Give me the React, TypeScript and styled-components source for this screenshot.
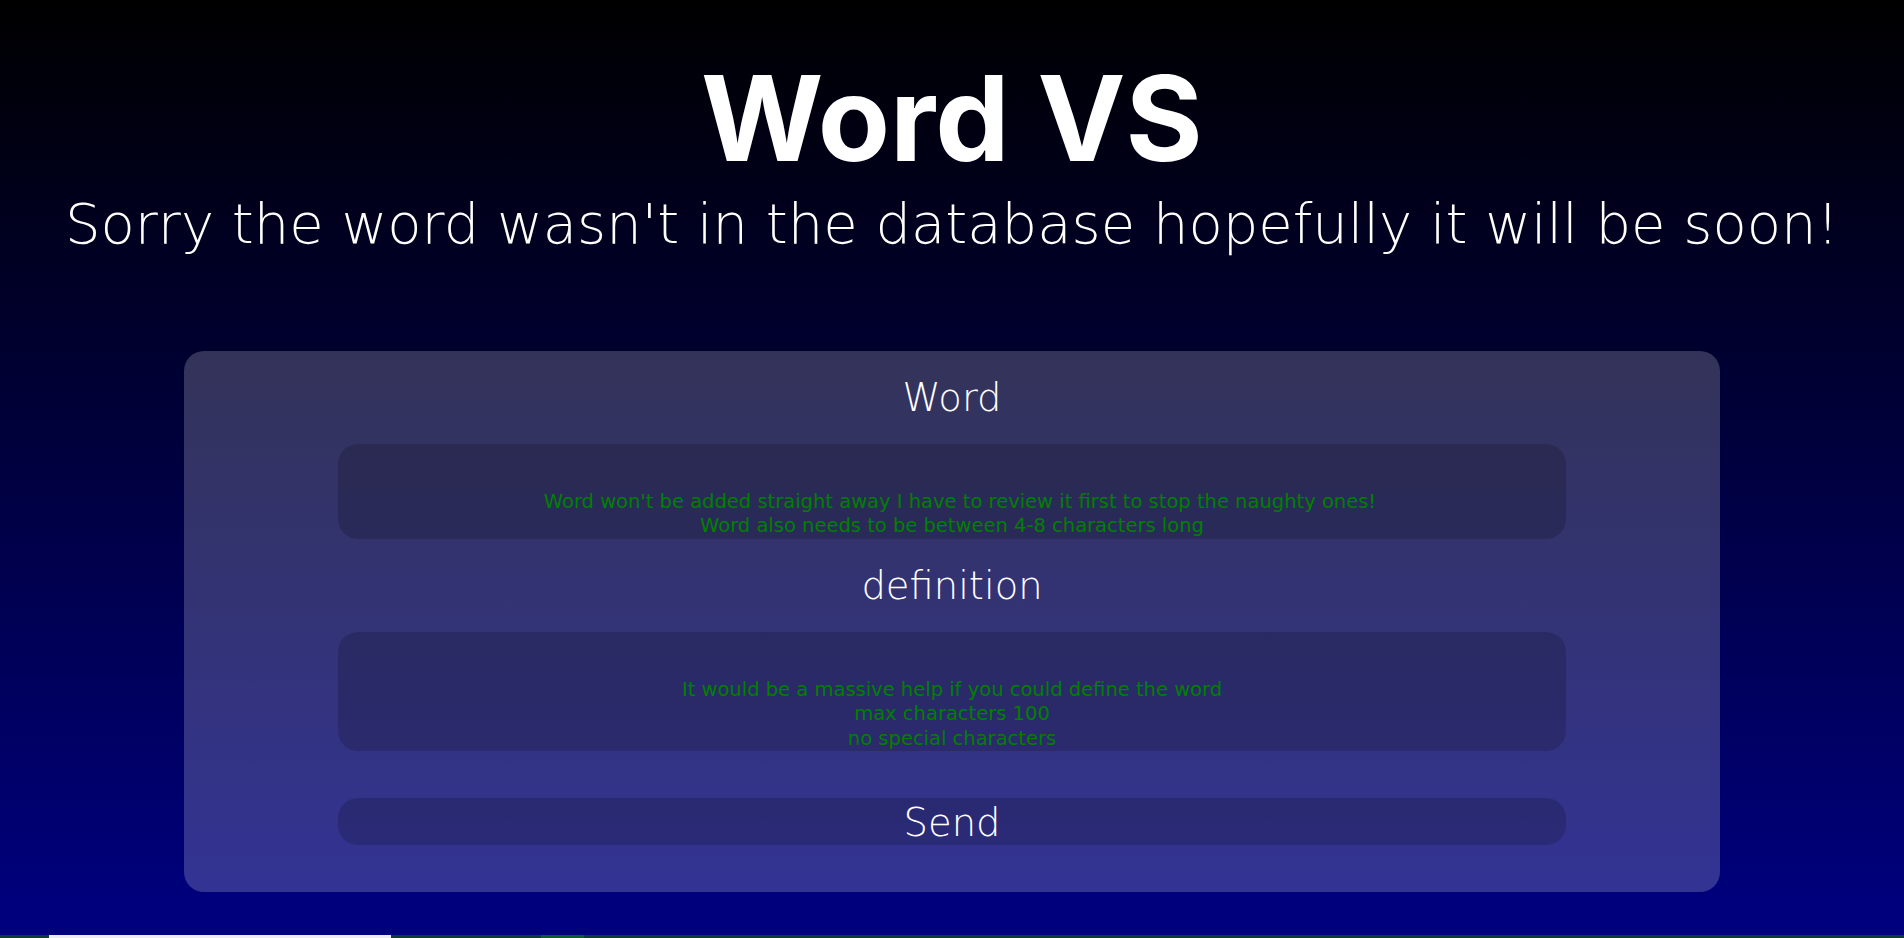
import React from "react";
import styled, { createGlobalStyle } from "styled-components";

const GlobalStyle = createGlobalStyle`
  html, body {
    margin: 0;
    padding: 0;
  }
  body {
    background: #000080;
    font-family: "DejaVu Sans", "Liberation Sans", sans-serif;
    color: #ffffff;
  }
  * { box-sizing: border-box; }
`;

const Page = styled.main`
  display: flex;
  flex-direction: column;
  min-height: 938px;
`;

const Hero = styled.section`
  height: 935px;
  display: flex;
  flex-direction: column;
  align-items: center;
  padding-top: 59px;
  background: linear-gradient(to bottom, #000000 0%, #000080 100%);
`;

const Title = styled.h1`
  margin: 0;
  font-family: "Inter", "DejaVu Sans", sans-serif;
  font-weight: 700;
  font-size: 118px;
  line-height: 118px;
  color: #ffffff;
  text-align: center;
`;

const Subtitle = styled.p`
  margin: 14px 0 0;
  font-family: "DejaVu Sans", sans-serif;
  font-weight: 200;
  font-size: 56px;
  line-height: 66px;
  color: #ffffff;
  text-align: center;
  white-space: nowrap;
`;

const Card = styled.form`
  width: 1536px;
  margin-top: 94px;
  padding-bottom: 47px;
  border-radius: 20px;
  background: rgba(255, 255, 255, 0.2);
  display: flex;
  flex-direction: column;
  align-items: center;
`;

const Label = styled.label`
  margin: 23px 0 22px;
  font-family: "DejaVu Sans", sans-serif;
  font-weight: 200;
  font-size: 38.5px;
  line-height: 48px;
  color: #ffffff;
  text-align: center;
`;

const Field = styled.div`
  width: 80%;
  border-radius: 20px;
  background: rgba(0, 0, 0, 0.17);
  display: flex;
  flex-direction: column;
`;

const FieldInput = styled.input`
  height: 46px;
  width: 100%;
  border: none;
  outline: none;
  background: transparent;
  color: #ffffff;
  font-family: "DejaVu Sans", sans-serif;
  font-size: 20px;
  text-align: center;
`;

const Hint = styled.p`
  margin: 0;
  font-family: "DejaVu Sans", sans-serif;
  font-weight: 400;
  font-size: 19.5px;
  line-height: 24.4px;
  color: #008000;
  text-align: center;
`;

const HintLine = styled.span<{ $indent?: number }>`
  display: block;
  padding-left: ${(p) => p.$indent ?? 0}px;
`;

const SendButton = styled.button`
  width: 80%;
  height: 47px;
  margin-top: 47px;
  padding: 0;
  border: none;
  border-radius: 20px;
  background: rgba(0, 0, 0, 0.17);
  color: #ffffff;
  font-family: "DejaVu Sans", sans-serif;
  font-weight: 200;
  font-size: 38.5px;
  line-height: 49px;
  text-align: center;
  cursor: pointer;
`;

const Strip = styled.section`
  height: 3px;
  display: flex;
  gap: 150px;
  padding-left: 49px;
  background: #0e3b33;
  overflow: hidden;
`;

const StripBlock = styled.div<{ $w: number; $tone: string }>`
  width: ${(p) => p.$w}px;
  height: 3px;
  background: ${(p) => p.$tone};
`;

export default function App() {
  return (
    <>
      <GlobalStyle />
      <Page>
        <Hero>
          <Title>Word VS</Title>
          <Subtitle>Sorry the word wasn't in the database hopefully it will be soon!</Subtitle>
          <Card onSubmit={(e) => e.preventDefault()}>
            <Label htmlFor="word">Word</Label>
            <Field>
              <FieldInput id="word" type="text" />
              <Hint>
                <HintLine $indent={16}>
                  Word won't be added straight away I have to review it first to stop the naughty ones!
                </HintLine>
                <HintLine>Word also needs to be between 4-8 characters long</HintLine>
              </Hint>
            </Field>
            <Label htmlFor="definition">definition</Label>
            <Field>
              <FieldInput id="definition" type="text" />
              <Hint>
                <HintLine>It would be a massive help if you could define the word</HintLine>
                <HintLine>max characters 100</HintLine>
                <HintLine>no special characters</HintLine>
              </Hint>
            </Field>
            <SendButton type="submit">Send</SendButton>
          </Card>
        </Hero>
        <Strip>
          <StripBlock $w={342} $tone="#ececf0" />
          <StripBlock $w={43} $tone="#0c5d2b" />
        </Strip>
      </Page>
    </>
  );
}
